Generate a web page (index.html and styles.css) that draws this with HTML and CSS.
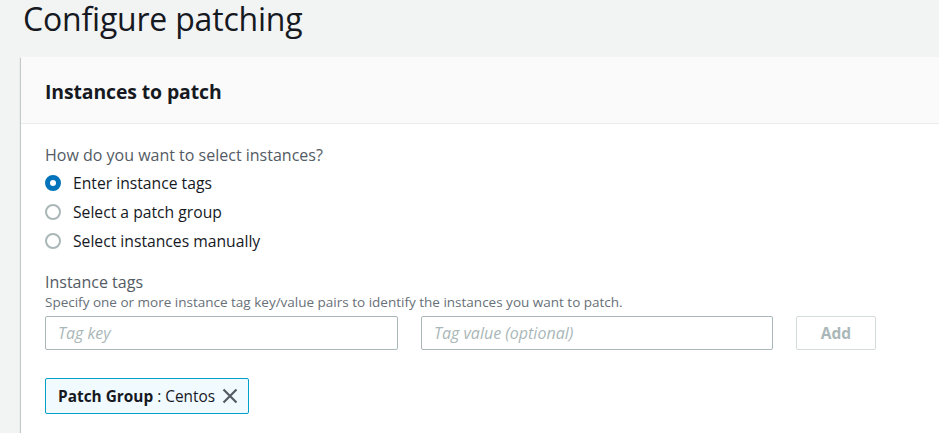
FILE: index.html
```html
<!DOCTYPE html>
<html>
<head>
<meta charset="utf-8">
<link rel="stylesheet" href="styles.css">
</head>
<body>
<div class="page">
  <h1 class="title">Configure patching</h1>
  <section class="card">
    <header class="card-header">
      <h2>Instances to patch</h2>
    </header>
    <div class="card-body">
      <div class="question">How do you want to select instances?</div>
      <div class="radios">
        <label class="radio"><span class="dot checked"></span><span>Enter instance tags</span></label>
        <label class="radio"><span class="dot"></span><span>Select a patch group</span></label>
        <label class="radio"><span class="dot"></span><span>Select instances manually</span></label>
      </div>
      <div class="field">
        <div class="field-label">Instance tags</div>
        <div class="field-desc">Specify one or more instance tag key/value pairs to identify the instances you want to patch.</div>
        <div class="tag-row">
          <div class="input key"><span class="ph">Tag key</span></div>
          <div class="input value"><span class="ph">Tag value (optional)</span></div>
          <div class="btn">Add</div>
        </div>
      </div>
      <div class="token">
        <span class="token-text"><b>Patch Group</b> : Centos</span>
        <svg class="x" width="16" height="16" viewBox="0 0 16 16"><path d="M1.5 1.5 L14.5 14.5 M14.5 1.5 L1.5 14.5" stroke="#545b64" stroke-width="2.2" fill="none"/></svg>
      </div>
    </div>
  </section>
</div>
</body>
</html>
```
FILE: styles.css
```css
html, body {
  margin: 0;
  padding: 0;
  background: #f2f3f3;
  font-family: "Open Sans", "Noto Sans", sans-serif;
  color: #16191f;
  overflow: hidden;
}
.page {
  padding-left: 21px;
}
.title {
  margin: 0;
  padding-left: 2px;
  font-weight: 400;
  font-size: 32px;
  line-height: 38px;
  height: 57px;
  color: #16191f;
  letter-spacing: -0.2px;
}
.card {
  background: #fff;
  box-shadow: 0 1px 1px 0 rgba(0,28,36,0.3), 1px 1px 1px 0 rgba(0,28,36,0.15), -1px 1px 1px 0 rgba(0,28,36,0.15);
  height: 400px;
}
.card-header {
  background: #fafafa;
  border-bottom: 1px solid #eaeded;
  height: 67px;
  padding-left: 24px;
  padding-top: 3px;
  box-sizing: border-box;
  display: flex;
  align-items: center;
}
.card-header h2 {
  margin: 0;
  font-size: 19.4px;
  font-weight: 700;
  letter-spacing: -0.1px;
}
.card-body {
  padding: 20px 24px 0 24px;
}
.question {
  color: #545b64;
  font-size: 16px;
  line-height: 22px;
}
.radios {
  display: flex;
  flex-direction: column;
  margin-top: 3px;
}
.radio {
  display: flex;
  align-items: center;
  height: 28.7px;
  font-size: 15.7px;
  color: #16191f;
}
.dot {
  width: 16px;
  height: 16px;
  box-sizing: border-box;
  border-radius: 50%;
  border: 2px solid #aab7b8;
  margin-right: 12px;
  flex: none;
}
.dot.checked {
  border: 5px solid #0073bb;
  background: #fff;
}
.field {
  margin-top: 16px;
}
.field-label {
  color: #545b64;
  font-size: 16px;
  line-height: 22px;
}
.field-desc {
  color: #687078;
  font-size: 13.5px;
  line-height: 18px;
}
.tag-row {
  display: flex;
  margin-top: 5px;
  gap: 23px;
}
.input {
  height: 34px;
  box-sizing: border-box;
  border: 1px solid #aab7b8;
  border-radius: 2px;
  display: flex;
  align-items: center;
  padding-left: 12px;
}
.input.key { width: 353px; }
.input.value { width: 352px; }
.ph {
  font-style: italic;
  color: #aab7b8;
  font-size: 16px;
}
.btn {
  width: 80px;
  height: 34px;
  box-sizing: border-box;
  border: 1px solid #d5dbdb;
  border-radius: 2px;
  display: flex;
  align-items: center;
  justify-content: center;
  font-weight: 700;
  color: #aab7b8;
  font-size: 15.5px;
}
.token {
  margin-top: 28px;
  display: inline-flex;
  align-items: center;
  height: 36px;
  box-sizing: border-box;
  width: 204px;
  border: 1px solid #00a1c9;
  border-radius: 2px;
  background: #f1faff;
  padding-left: 12px;
  font-size: 15.4px;
  color: #16191f;
}
.token-text {
  flex: 1;
}
.x {
  margin-right: 10px;
}
```
